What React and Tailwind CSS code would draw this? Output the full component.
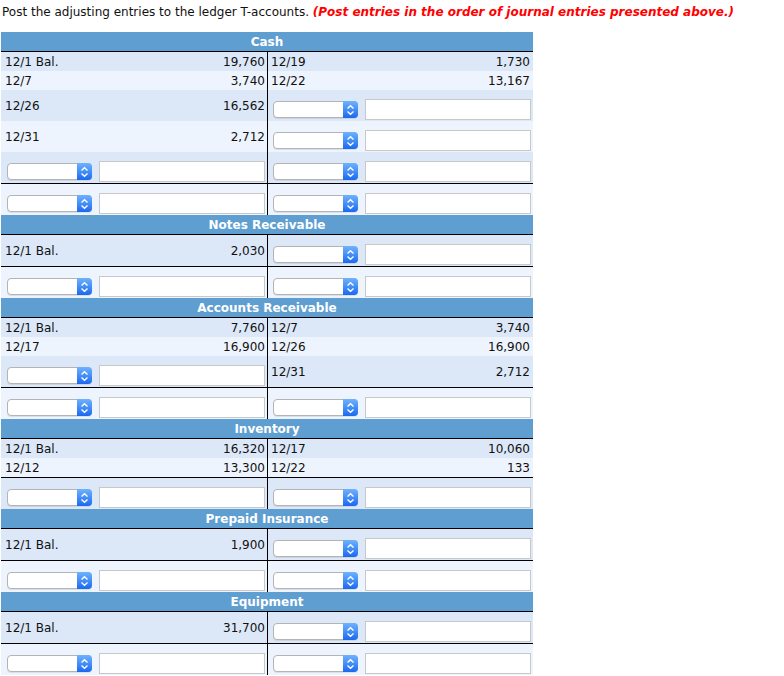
const accounts = [
  {
    title: "Cash",
    rows: [
      { l: ["12/1 Bal.", "19,760"], r: ["12/19", "1,730"] },
      { l: ["12/7", "3,740"], r: ["12/22", "13,167"] },
      { l: ["12/26", "16,562"], r: null },
      { l: ["12/31", "2,712"], r: null },
      { l: null, r: null },
    ],
  },
  {
    title: "Notes Receivable",
    rows: [{ l: ["12/1 Bal.", "2,030"], r: null }],
  },
  {
    title: "Accounts Receivable",
    rows: [
      { l: ["12/1 Bal.", "7,760"], r: ["12/7", "3,740"] },
      { l: ["12/17", "16,900"], r: ["12/26", "16,900"] },
      { l: null, r: ["12/31", "2,712"] },
    ],
  },
  {
    title: "Inventory",
    rows: [
      { l: ["12/1 Bal.", "16,320"], r: ["12/17", "10,060"] },
      { l: ["12/12", "13,300"], r: ["12/22", "133"] },
    ],
  },
  {
    title: "Prepaid Insurance",
    rows: [{ l: ["12/1 Bal.", "1,900"], r: null }],
  },
  {
    title: "Equipment",
    rows: [{ l: ["12/1 Bal.", "31,700"], r: null }],
  },
];

/* fake mac-style select box */
const SelectBox = () => (
  <div className="flex h-[17px] w-[85px] justify-end rounded-[4px] border border-[#b4b4b4] bg-white shadow-[0_1px_0_rgba(0,0,0,0.08)]">
    <div className="-mr-px -my-px flex h-[17px] w-[15px] items-center justify-center rounded-r-[4px] bg-gradient-to-b from-[#6fb2fb] to-[#1a68f1]">
      <svg width="9" height="12" viewBox="0 0 9 12" fill="none">
        <path d="M1.5 4.5 L4.5 1.8 L7.5 4.5" stroke="white" strokeWidth="1.4" />
        <path d="M1.5 7.5 L4.5 10.2 L7.5 7.5" stroke="white" strokeWidth="1.4" />
      </svg>
    </div>
  </div>
);

const Entry = ({ right }) => (
  <div
    className={`flex h-full items-center gap-[7px] pt-[8px] ${
      right ? "pl-[5px]" : "pl-[6px]"
    }`}
  >
    <SelectBox />
    <input
      type="text"
      className="h-[21px] w-[166px] border border-[#c8c8c8] bg-white outline-none"
    />
  </div>
);

const TextCell = ({ cell, right }) => (
  <div
    className={`flex h-full items-center justify-between ${
      right ? "pl-[3px] pr-[3px]" : "pl-[4px] pr-[2px]"
    }`}
  >
    <span>{cell[0]}</span>
    <span>{cell[1]}</span>
  </div>
);

const Row = ({ row, dark, last }) => {
  const short = row.l && row.r;
  return (
    <div
      className={`flex ${dark ? "bg-[#dce8f8]" : "bg-[#edf4fd]"} ${
        last ? "h-[32px] border-t border-black" : short ? "h-[19px]" : "h-[31px]"
      }`}
    >
      <div className="w-[266px]">
        {row.l ? <TextCell cell={row.l} /> : <Entry />}
      </div>
      <div className="w-px bg-black" />
      <div className="flex-1">
        {row.r ? <TextCell cell={row.r} right /> : <Entry right />}
      </div>
    </div>
  );
};

const TAccount = ({ account }) => {
  const rows = [...account.rows, { l: null, r: null, last: true }];
  return (
    <div>
      <div className="h-[20px] border-b border-black bg-[#5f9ed1] pt-[2px] text-center font-bold leading-[17px] text-white">
        {account.title}
      </div>
      {rows.map((row, i) => (
        <Row key={i} row={row} dark={i % 2 === 0} last={row.last} />
      ))}
    </div>
  );
};

export default function App() {
  return (
    <div className="min-h-[676px] w-[784px] bg-white font-['DejaVu_Sans',sans-serif] text-[12px] text-[#111]">
      <div className="h-[32px] pl-[2px] pt-[4px] leading-[16px]">
        Post the adjusting entries to the ledger T-accounts.{" "}
        <span className="font-bold italic text-[#ff0000]">
          (Post entries in the order of journal entries presented above.)
        </span>
      </div>

      <div className="ml-px w-[532px]">
        {accounts.map((a) => (
          <TAccount key={a.title} account={a} />
        ))}
      </div>
    </div>
  );
}
